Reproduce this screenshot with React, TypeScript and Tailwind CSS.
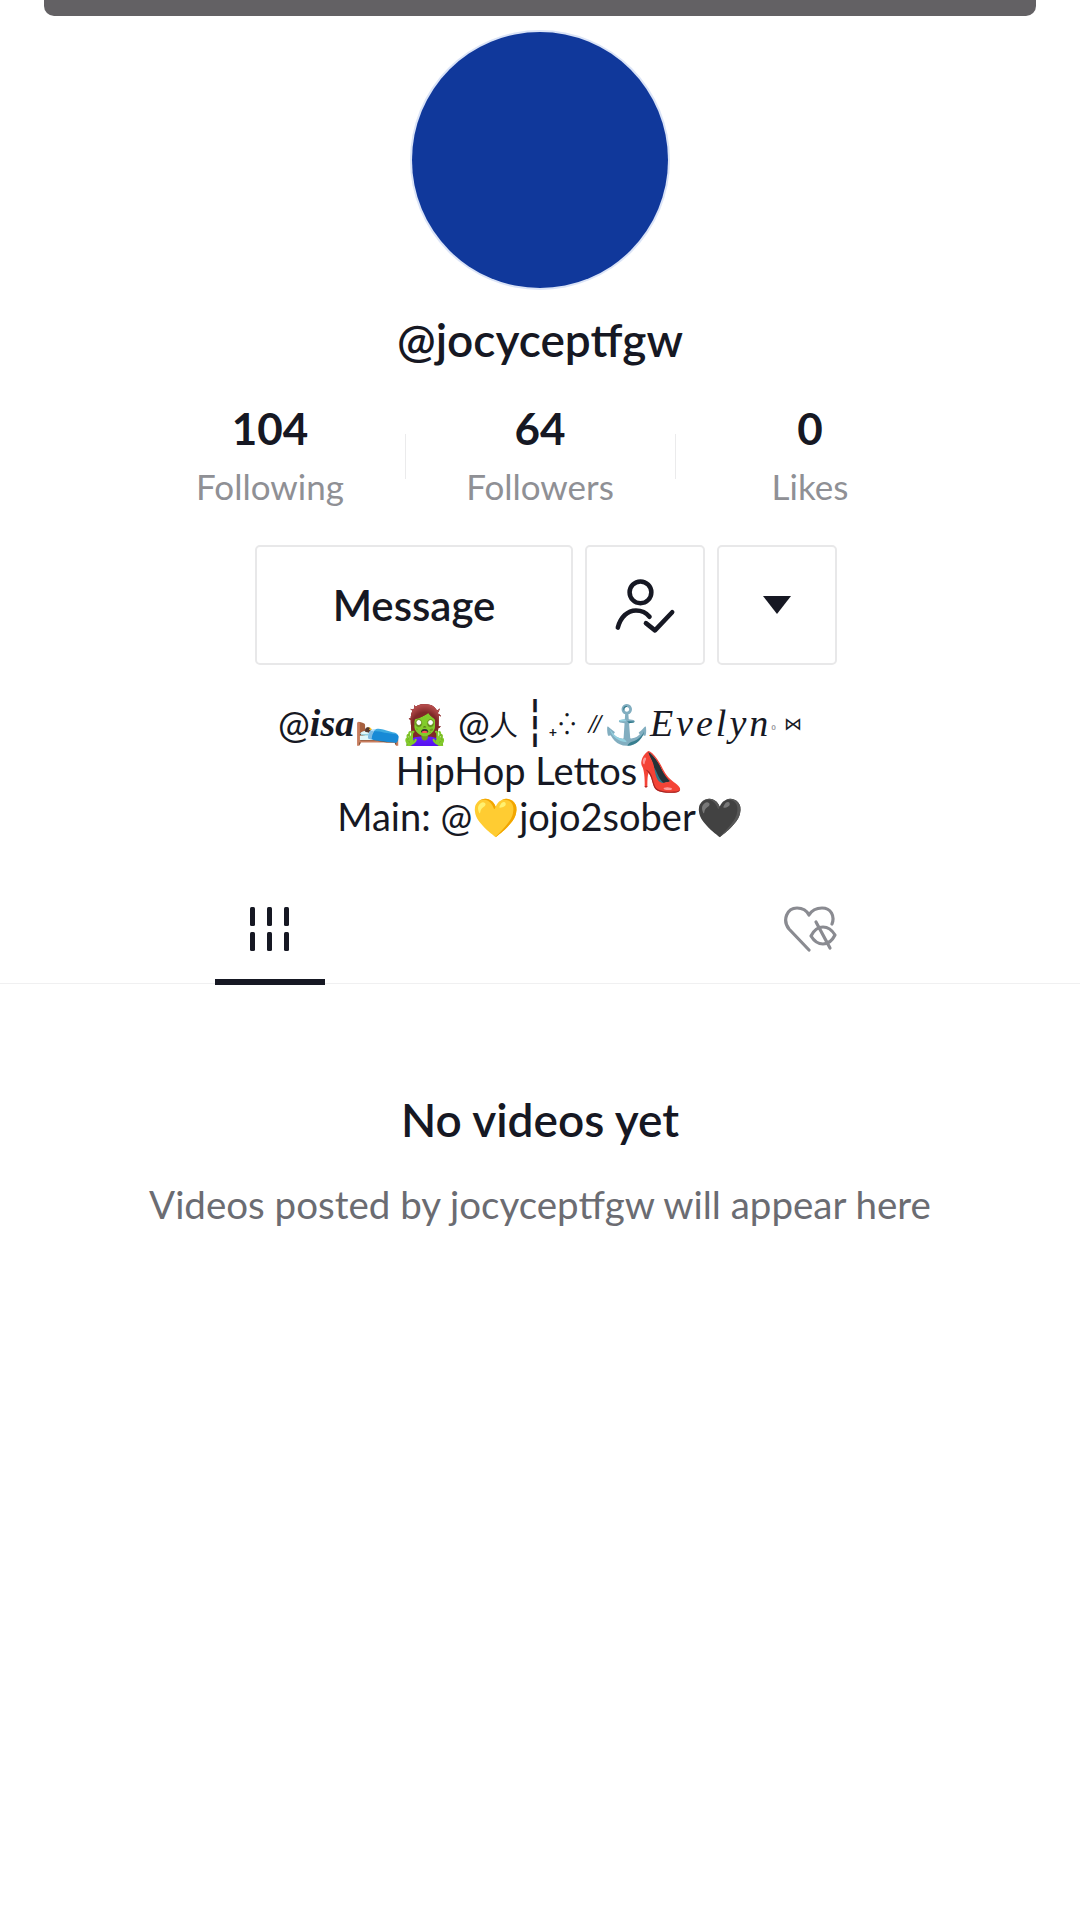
const stats = [
  { value: "104", label: "Following" },
  { value: "64", label: "Followers" },
  { value: "0", label: "Likes" },
];

function GridTabIcon() {
  return (
    <svg width="40" height="44" viewBox="0 0 40 44" fill="#161823">
      {[0, 17, 34].map((x) => (
        <g key={x}>
          <rect x={x} y="0" width="5" height="19" rx="1.5" />
          <rect x={x} y="25" width="5" height="19" rx="1.5" />
        </g>
      ))}
    </svg>
  );
}

function HiddenHeartIcon() {
  return (
    <svg width="54" height="46" viewBox="0 0 54 46" fill="none" stroke="#8a8b91" strokeWidth="3.2" strokeLinecap="round" strokeLinejoin="round">
      <path d="M26 44 6 23C-1 14 4 2 14 2c6 0 10 3 12 7 3-5 8-7 13-7 9 0 13 8 10 16" />
      <path d="M28 30c3-6 8-9 12-9s9 3 12 8c-3 6-8 9-12 9s-9-3-12-8Z" />
      <path d="M33 16l14 26" />
    </svg>
  );
}

function FollowingIcon() {
  return (
    <svg width="64" height="58" viewBox="0 0 70 64" fill="none" stroke="#161823" strokeWidth="5" strokeLinecap="round" strokeLinejoin="round">
      <circle cx="30" cy="18" r="12" />
      <path d="M5 57C8 45 16 38 25 38c6 0 11 2 15 7" />
      <path d="M36 52l10 8 19-20" />
    </svg>
  );
}

export default function App() {
  return (
    <div className="flex h-[1920px] w-[1080px] flex-col items-center overflow-hidden bg-white font-['Lato','Liberation_Sans',sans-serif] text-[#161823]">
      <div className="h-4 w-[992px] shrink-0 rounded-b-[10px] bg-[#636164]" />

      <div className="mt-4 h-[256px] w-[256px] shrink-0 rounded-full bg-[#10389b] shadow-[0_0_0_2px_#dbe4f7]" />

      <h1 className="mt-[26px] text-[46px] font-semibold leading-[52px]">@jocyceptfgw</h1>

      <div className="mt-[37px] flex w-[810px] items-start">
        {stats.map((s, i) => (
          <div key={s.label} className="relative flex w-[270px] flex-col items-center">
            {i > 0 && <span className="absolute left-0 top-[31px] h-[45px] w-px bg-[#ebebec]" />}
            <span className="text-[44px] font-bold leading-[50px]">{s.value}</span>
            <span className="mt-3 text-[35px] leading-[42px] text-[#8f9095]">{s.label}</span>
          </div>
        ))}
      </div>

      <div className="mt-[38px] ml-3 flex h-[120px] gap-3">
        <button className="w-[318px] rounded-[5px] border-2 border-[#e8e8e9] text-[42px] font-semibold">Message</button>
        <button className="flex w-[120px] items-center justify-center rounded-[5px] border-2 border-[#e8e8e9]">
          <FollowingIcon />
        </button>
        <button className="flex w-[120px] items-center justify-center rounded-[5px] border-2 border-[#e8e8e9]">
          <span className="h-0 w-0 border-x-[14px] border-t-[18px] border-x-transparent border-t-[#161823]" />
        </button>
      </div>

      <div className="mt-[35px] flex flex-col items-center text-[38px] leading-[46.5px]">
        <p className="flex items-center whitespace-nowrap">
          <span>@</span>
          <span className="font-['Liberation_Serif',serif] font-bold italic">isa</span>
          <span>🛌🧟‍♀️ @</span>
          <span className="text-[28px]">⼈</span>
          <span className="ml-1 font-['DejaVu_Sans',sans-serif] text-[44px]">┆</span>
          <span className="text-[28px]">₊⁛</span>
          <span className="ml-3 text-[24px] italic">//</span>
          <span>⚓</span>
          <span className="font-['Liberation_Serif',serif] italic tracking-[3px]">Evelyn</span>
          <span className="text-[14px] text-[#8f9095]">₀</span>
          <span className="ml-2 text-[18px]">⋈</span>
        </p>
        <p>HipHop Lettos👠</p>
        <p>Main: @💛jojo2sober🖤</p>
      </div>

      <div className="mt-[38px] flex h-[106px] w-full border-b border-[#f0f0f1]">
        <div className="flex w-1/2 justify-center">
          <div className="flex h-[106px] w-[110px] translate-y-px justify-center border-b-[6px] border-[#161823] pt-[28px]">
            <GridTabIcon />
          </div>
        </div>
        <div className="flex w-1/2 justify-center pt-[28px]">
          <HiddenHeartIcon />
        </div>
      </div>

      <h2 className="mt-[111px] text-[46px] font-semibold leading-[50px]">No videos yet</h2>
      <p className="mt-[37px] text-[38.5px] leading-[44px] text-[#6b6c72]">Videos posted by jocyceptfgw will appear here</p>
    </div>
  );
}
